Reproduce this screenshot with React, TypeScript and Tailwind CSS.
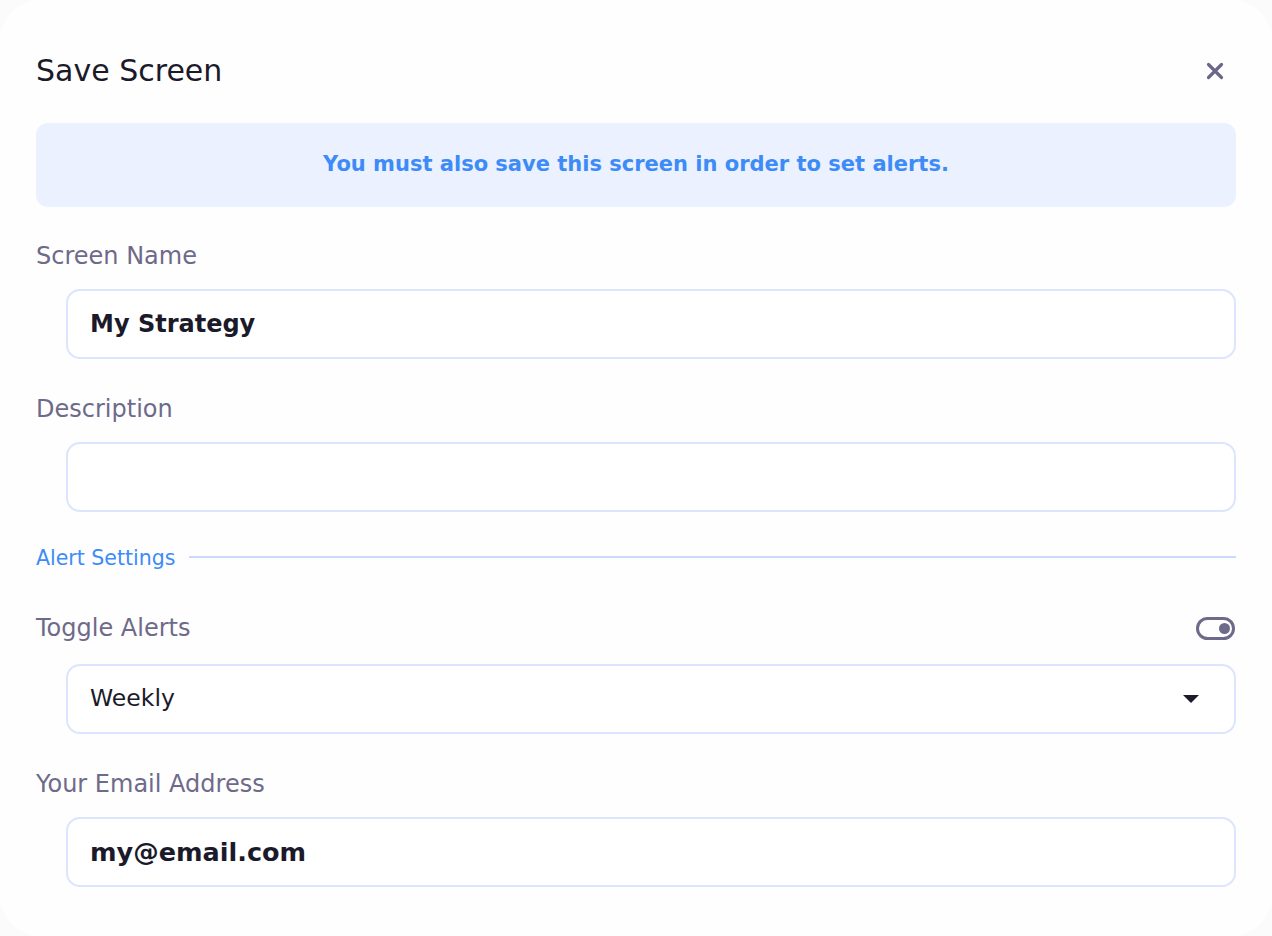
import React from "react";

const font = { fontFamily: "'DejaVu Sans', 'Noto Sans', sans-serif" };

function Label({ children }: { children: React.ReactNode }) {
  return <div className="h-[34px] flex items-center text-[24px] text-[#6e6a8a] leading-none whitespace-nowrap">{children}</div>;
}

function Box({ children, className = "" }: { children?: React.ReactNode; className?: string }) {
  return (
    <div className="pl-[30px]">
      <div className={"h-[70px] rounded-[14px] border-2 border-[#dbe5fd] bg-white flex items-center " + className}>
        {children}
      </div>
    </div>
  );
}

export default function App() {
  return (
    <div className="w-[1272px] h-[936px] bg-[#fbfbfc] overflow-hidden" style={font}>
      <div className="w-full h-full bg-[#fefefe] rounded-[40px] px-[36px] pt-[52px] flex flex-col">
        <div className="flex items-center justify-between h-[38px]">
          <h1 className="text-[30px] text-[#1b1a2b] leading-none whitespace-nowrap">Save Screen</h1>
          <svg width="18" height="18" viewBox="0 0 18 18" className="mr-[12px]">
            <path d="M2.5 2.5 L15.5 15.5 M15.5 2.5 L2.5 15.5" stroke="#6b6789" strokeWidth="3.2" strokeLinecap="round" />
          </svg>
        </div>
        <div className="mt-[33px] h-[84px] rounded-[12px] bg-[#ebf1fe] flex items-center justify-center">
          <span className="text-[21px] font-bold text-[#3d8bf7] whitespace-nowrap">You must also save this screen in order to set alerts.</span>
        </div>

        <div className="mt-[32px]">
          <Label>Screen Name</Label>
        </div>
        <div className="mt-[16px]">
          <Box className="px-[22px]">
            <span className="text-[24px] font-bold text-[#1b1a2b] whitespace-nowrap">My Strategy</span>
          </Box>
        </div>

        <div className="mt-[33px]">
          <Label>Description</Label>
        </div>
        <div className="mt-[16px]">
          <Box />
        </div>

        <div className="mt-[31px] flex items-center gap-[14px] h-[30px]">
          <span className="text-[20.5px] text-[#3d8bf7] whitespace-nowrap leading-none">Alert Settings</span>
          <div className="flex-1 h-[2px] bg-[#c9dafc] -mt-[2px]" />
        </div>

        <div className="mt-[38px] flex items-center justify-between">
          <Label>Toggle Alerts</Label>
          <div className="w-[39px] h-[23px] rounded-full border-[3px] border-[#6e6a8a] flex items-center justify-end pr-[2px] mr-[1px]">
            <div className="w-[11px] h-[11px] rounded-full bg-[#6e6a8a]" />
          </div>
        </div>
        <div className="mt-[19px]">
          <Box className="justify-between pl-[22px] pr-[35px]">
            <span className="text-[23.5px] text-[#1b1a2b] whitespace-nowrap">Weekly</span>
            <svg width="16" height="9" viewBox="0 0 16 9">
              <path d="M0 0 H16 L8 8 Z" fill="#1b1a2b" />
            </svg>
          </Box>
        </div>

        <div className="mt-[33px]">
          <Label>Your Email Address</Label>
        </div>
        <div className="mt-[16px]">
          <Box className="px-[22px]">
            <span className="text-[25.5px] font-bold text-[#1b1a2b] whitespace-nowrap">my@email.com</span>
          </Box>
        </div>
      </div>
    </div>
  );
}
